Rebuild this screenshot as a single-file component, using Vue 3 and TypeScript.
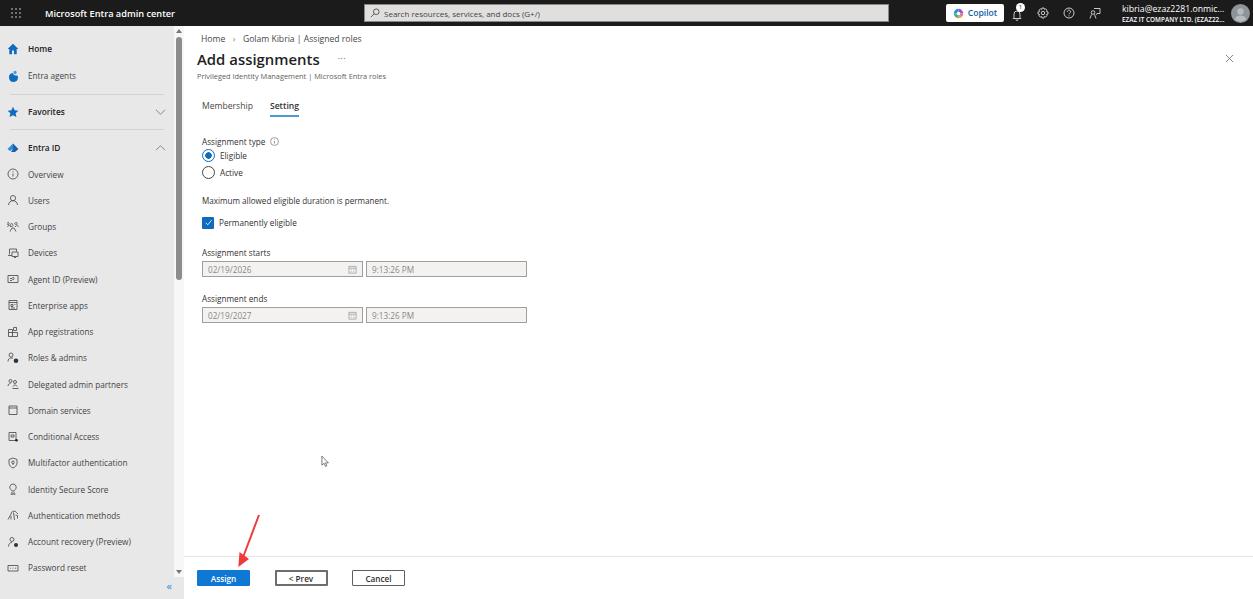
<template>
  <div class="app">
    <header class="topbar">
      <svg class="waffle" viewBox="0 0 10 10" width="10" height="10">
        <g fill="#d8d8d8">
          <template v-for="y in [1, 5, 9]" :key="y">
            <circle v-for="x in [1, 5, 9]" :key="x" :cx="x" :cy="y" r="0.8" />
          </template>
        </g>
      </svg>
      <div class="brand">Microsoft Entra admin center</div>
      <div class="search">
        <svg viewBox="0 0 12 12" width="10" height="10" fill="none" stroke="#444" stroke-width="1">
          <circle cx="7.5" cy="4.5" r="3.4" />
          <path d="M5 7 1 11" />
        </svg>
        <span>Search resources, services, and docs (G+/)</span>
      </div>
      <div class="top-right">
        <button class="copilot">
          <svg viewBox="0 0 12 12" width="11" height="11">
            <path d="M6 .8A5.200 5.200 0 0 0 .8 6H4a2 2 0 0 1 2-2z" fill="#2f8fe8" />
            <path d="M6 .8A5.200 5.200 0 0 1 11.200 6H8a2 2 0 0 0-2-2z" fill="#8a5fd8" />
            <path d="M.8 6A5.200 5.200 0 0 0 6 11.200V8a2 2 0 0 1-2-2z" fill="#3fb68b" />
            <path d="M11.200 6A5.200 5.200 0 0 1 6 11.200V8a2 2 0 0 0 2-2z" fill="#ee6a8c" />
            <path d="M6 11.200a5.200 5.200 0 0 0 3.500-1.400L8 7.500A2 2 0 0 1 6 8z" fill="#f5a83c" />
          </svg>
          Copilot
        </button>
        <div class="bell">
          <svg viewBox="0 0 12 12" width="12" height="12" fill="none" stroke="#ddd" stroke-width="0.9">
            <path d="M3 8.500V5a3 3 0 0 1 6 0v3.500l1 1H2zM5 10.500a1 1 0 0 0 2 0" />
          </svg>
          <span class="badge">1</span>
        </div>
        <svg class="top-ico gear" viewBox="0 0 12 12" width="12" height="12" fill="none" stroke="#ddd" stroke-width="0.9">
          <circle cx="6" cy="6" r="1.7" />
          <path d="M5 1h2l.3 1.400 1.300-.6 1.400 1.400-.6 1.300L11 5v2l-1.600.4.6 1.300-1.400 1.400-1.300-.6L7 11H5l-.3-1.500-1.300.6L2 8.700l.6-1.300L1 7V5l1.600-.5L2 3.200l1.400-1.400 1.300.6z" />
        </svg>
        <svg class="top-ico" viewBox="0 0 12 12" width="12" height="12" fill="none" stroke="#ddd" stroke-width="0.9">
          <circle cx="6" cy="6" r="5" />
          <path d="M4.400 4.700a1.600 1.600 0 1 1 2.400 1.400c-.5.3-.8.6-.8 1.200M6 8.400v.9" />
        </svg>
        <svg class="top-ico" viewBox="0 0 12 12" width="12" height="12" fill="none" stroke="#ddd" stroke-width="0.9">
          <path d="M5 1.500h6v5H8L7 8" />
          <circle cx="4" cy="5.500" r="1.800" />
          <path d="M1 11.500 2.500 7.500M7 11.500 5.500 7.500" />
        </svg>
        <div class="account">
          <div class="acc-mail">kibria@ezaz2281.onmic...</div>
          <div class="acc-org">EZAZ IT COMPANY LTD. (EZAZ22...</div>
        </div>
        <svg class="avatar" viewBox="0 0 19 19" width="19" height="19">
          <circle cx="9.500" cy="9.500" r="9.500" fill="#8e9499" />
          <circle cx="9.500" cy="7.500" r="3.200" fill="#b7bcc0" />
          <path d="M3.800 15.500c.6-3 3-4 5.700-4s5.100 1 5.700 4a9.500 9.500 0 0 1-11.400 0z" fill="#b7bcc0" />
        </svg>
      </div>
    </header>

    <div class="body">
      <div class="side-col">
        <div class="side-top">
          <aside class="sidebar">
            <div v-for="item in navItems" :key="item.label" :class="['nav-row', item.kind]">
              <template v-if="item.kind !== 'divider'">
                <svg class="nav-ico" viewBox="0 0 12 12" width="12" height="12" fill="none" stroke="#555" stroke-width="0.9">
                  <path v-if="item.fill" :d="item.icon" :fill="item.fill" stroke="none" />
                  <path v-else :d="item.icon" />
                  <path v-if="item.icon2" :d="item.icon2" :fill="item.fill2" stroke="none" />
                </svg>
                <span class="nav-label">{{ item.label }}</span>
                <svg v-if="item.chevron" class="chev" viewBox="0 0 12 6" width="11" height="6" fill="none" stroke="#666" stroke-width="0.8">
                  <path :d="item.chevron === 'up' ? 'M1 5.500 6 .5l5 5' : 'M1 .5l5 5 5-5'" />
                </svg>
              </template>
            </div>
          </aside>
          <div class="scrollbar">
            <span class="arrow-up"></span>
            <span class="thumb"></span>
            <span class="arrow-down"></span>
          </div>
        </div>
        <div class="collapse">«</div>
      </div>

      <main class="main">
        <div class="content">
          <div class="crumbs">
            <span>Home</span>
            <span class="sep">›</span>
            <span>Golam Kibria | Assigned roles</span>
          </div>
          <div class="title-row">
            <h1>Add assignments</h1>
            <span class="more">···</span>
            <svg class="close" viewBox="0 0 10 10" width="9" height="9" fill="none" stroke="#555" stroke-width="0.8">
              <path d="M1 1l8 8M9 1 1 9" />
            </svg>
          </div>
          <div class="subtitle">Privileged Identity Management | Microsoft Entra roles</div>

          <div class="tabs">
            <span class="tab">Membership</span>
            <span class="tab active">Setting</span>
          </div>

          <div class="form">
            <div class="label-row">
              Assignment type
              <svg viewBox="0 0 10 10" width="9" height="9" fill="none" stroke="#666" stroke-width="0.7">
                <circle cx="5" cy="5" r="4.400" />
                <path d="M5 4.300v3M5 2.500v.9" />
              </svg>
            </div>
            <div class="radio-row"><span class="radio on"></span>Eligible</div>
            <div class="radio-row"><span class="radio"></span>Active</div>
            <p class="note">Maximum allowed eligible duration is permanent.</p>
            <div class="check-row">
              <span class="check">
                <svg viewBox="0 0 12 12" width="11" height="11" fill="none" stroke="#fff" stroke-width="0.9">
                  <path d="M3 6.300 5.200 8.500 9.300 3.500" />
                </svg>
              </span>
              Permanently eligible
            </div>

            <div v-for="row in dateRows" :key="row.label" class="date-block">
              <div class="date-label">{{ row.label }}</div>
              <div class="date-inputs">
                <div class="input date">
                  {{ row.date }}
                  <svg viewBox="0 0 10 10" width="9" height="9" fill="none" stroke="#999" stroke-width="0.8">
                    <path d="M1 1.500h8v7.500H1zM1 3.500h8M3 5h1M6 5h1M3 7h1M6 7h1" />
                  </svg>
                </div>
                <div class="input time">{{ row.time }}</div>
              </div>
            </div>
          </div>
        </div>

        <footer class="footer">
          <button class="btn primary">Assign</button>
          <button class="btn prev">&lt; Prev</button>
          <button class="btn cancel">Cancel</button>
        </footer>

        <!-- annotation drawn on top of the screenshot -->
        <svg class="red-arrow" viewBox="0 0 30 60" width="30" height="60">
          <path d="M24 1 8.500 42" stroke="#ee3b3b" stroke-width="2" fill="none" />
          <path d="M3.300 53 4.500 38 14 45z" fill="#ee3b3b" />
        </svg>
        <svg class="cursor" viewBox="0 0 10 14" width="9" height="13" fill="#fff" stroke="#333" stroke-width="0.7">
          <path d="M1 1v10l2.500-2 1.500 3.500 1.500-.6L5 8.500h3.200z" />
        </svg>
      </main>
    </div>
  </div>
</template>

<script setup lang="ts">
interface NavItem {
  label: string
  kind: string
  icon?: string
  fill?: string
  icon2?: string
  fill2?: string
  chevron?: string
}

// 12x12 icons, kept simple on purpose
const blue = '#0f6cbd'
const navItems: NavItem[] = [
  { label: 'Home', kind: 'strong', fill: blue, icon: 'M6 .8 .6 6h1.700v5.200h2.700V7.500h2v3.700h2.700V6h1.700z' },
  { label: 'Entra agents', kind: 'item-top', fill: blue, icon: 'M5.500 3a4.500 4.500 0 1 0 5.500 4.500c0-.8-.2-1.500-.6-2.100C9 6 6.500 5.300 5.500 3z', icon2: 'M8 .8a1.700 1.700 0 1 0 0 3.400A1.700 1.700 0 0 0 8 .8z', fill2: '#3d9be9' },
  { label: 'd1', kind: 'divider' },
  { label: 'Favorites', kind: 'strong fav', fill: blue, icon: 'M6 .8l1.600 3.500 3.800.4-2.800 2.600.8 3.800L6 9.200l-3.400 1.900.8-3.800L.6 4.700l3.800-.4z', chevron: 'down' },
  { label: 'd2', kind: 'divider' },
  { label: 'Entra ID', kind: 'strong', fill: '#2b8fe0', icon: 'M6 1.500.5 7l2.500 2 3-2z', icon2: 'M6 1.500 11.500 7 8 10H4l2-3z', fill2: '#1a5fb0', chevron: 'up' },
  { label: 'Overview', kind: 'item', icon: 'M6 1a5 5 0 1 0 0 10A5 5 0 0 0 6 1zM6 5.500v3M6 3.300v1' },
  { label: 'Users', kind: 'item', icon: 'M6 1.500a2.600 2.600 0 1 0 0 5.200 2.600 2.600 0 0 0 0-5.200zM1.500 11c.3-2.700 2-4.300 4.500-4.300s4.200 1.600 4.500 4.300' },
  { label: 'Groups', kind: 'item', icon: 'M2 2.500a1 1 0 1 0 0 .1zM10 2.500a1 1 0 1 0 0 .1zM6 4a1.400 1.400 0 1 0 0 .1zM3 5l1 1M9 5 8 6M3 10.500 5 7h2l2 3.500M.5 6l1-1.500h1M11.500 6l-1-1.500h-1' },
  { label: 'Devices', kind: 'item', icon: 'M2.500 7.500V2h7v2.500M1 8.500h4M5 5h6v4.500H5zM7 10.500h2' },
  { label: 'Agent ID (Preview)', kind: 'item', icon: 'M1 2.500h10v7H1zM3 5.500h2M3 7.500h2M7 5.500a1 1 0 1 0 0 .1z' },
  { label: 'Enterprise apps', kind: 'item', icon: 'M2 1.500h8v9H2zM2 3.500h8M4 5.500h2v2H4zM7.500 5.500h1M4 9h4' },
  { label: 'App registrations', kind: 'item', icon: 'M1.500 3.500h4v7h-4zM5.500 6.500h5v4h-5zM1.500 6.500h4M6.500 1.500l3-.1v3.100h-3z' },
  { label: 'Roles & admins', kind: 'item', icon: 'M4 1a2 2 0 1 0 0 4 2 2 0 0 0 0-4zM1 9.500c0-2 1-3.500 3-3.500h2', icon2: 'M9 6.500a2.300 2.300 0 1 0 0 4.600 2.300 2.300 0 0 0 0-4.600z', fill2: '#333' },
  { label: 'Delegated admin partners', kind: 'item', icon: 'M3.500 1.500a1.500 1.500 0 1 0 0 3 1.500 1.500 0 0 0 0-3zM8 2.500a1.500 1.500 0 1 0 0 3 1.500 1.500 0 0 0 0-3zM1 8c0-1.500 1-2.500 2.500-2.500M5.500 10.500h6M6 8.500c.3-1 1-1.500 2-1.500s1.700.5 2 1.500' },
  { label: 'Domain services', kind: 'item', icon: 'M2 2h8v8.500H2zM2 4h8' },
  { label: 'Conditional Access', kind: 'item', icon: 'M2 1.500h7v8H2zM4 4h3v2H4z', icon2: 'M9.500 8a1.300 1.300 0 1 0 0 2.600 1.300 1.300 0 0 0 0-2.600z', fill2: '#222' },
  { label: 'Multifactor authentication', kind: 'item', icon: 'M6 1 2 2.500v3.500c0 2.500 2 4.200 4 5 2-.8 4-2.500 4-5V2.500zM6 4a1.300 1.300 0 1 0 0 2.600A1.300 1.300 0 0 0 6 4zM6 6.600V8' },
  { label: 'Identity Secure Score', kind: 'item', icon: 'M6 1a3.200 3.200 0 0 0-2 5.700c.5.400.7.800.7 1.300h2.600c0-.5.200-.9.700-1.300A3.200 3.200 0 0 0 6 1zM4 10h4M3.500 11.200h5' },
  { label: 'Authentication methods', kind: 'item', icon: 'M1 10.500 4 5a3 3 0 0 1 5.500-1.500L11 5M6.500 3.500l1 7.500M4 7v3.500M8.500 6l2 .5v3' },
  { label: 'Account recovery (Preview)', kind: 'item', icon: 'M5 1.500a2 2 0 1 0 0 4 2 2 0 0 0 0-4zM1.500 10.500c0-2.500 1.500-4 3.500-4', icon2: 'M9 7a2 2 0 1 0 0 4 2 2 0 0 0 0-4z', fill2: '#333' },
  { label: 'Password reset', kind: 'item', icon: 'M1 3.500h10v5.500H1zM3 6.200h.8M5.500 6.200h.8M8 6.200h1.200' },
]

const dateRows = [
  { label: 'Assignment starts', date: '02/19/2026', time: '9:13:26 PM' },
  { label: 'Assignment ends', date: '02/19/2027', time: '9:13:26 PM' },
]
</script>

<style>
html, body {
  margin: 0;
  height: 100%;
  overflow: hidden;
}
</style>

<style scoped>
.app {
  width: 1253px;
  height: 599px;
  display: flex;
  flex-direction: column;
  font-family: "Open Sans", "Noto Sans", sans-serif;
  font-size: 8.2px;
  color: #323130;
  background: #fff;
  overflow: hidden;
}

/* top bar */
.topbar {
  height: 26px;
  flex: none;
  display: flex;
  align-items: center;
  background: #1b1b1b;
  color: #fff;
  box-sizing: border-box;
  padding-left: 11px;
}
.brand {
  margin-left: 24px;
  width: 319px;
  font-size: 9.2px;
  font-weight: 600;
}
.search {
  width: 525px;
  height: 18px;
  box-sizing: border-box;
  display: flex;
  align-items: center;
  gap: 4px;
  padding-left: 5px;
  background: #e0dfdd;
  border: 1px solid #8a8886;
  color: #444;
  font-size: 8px;
}
.top-right {
  margin-left: 57px;
  display: flex;
  align-items: center;
}
.copilot {
  width: 58px;
  height: 18px;
  display: flex;
  align-items: center;
  justify-content: center;
  gap: 4px;
  padding: 0;
  border: none;
  border-radius: 2px;
  background: #fff;
  color: #115ea3;
  font: 600 8.6px "Open Sans", sans-serif;
}
.bell {
  position: relative;
  margin-left: 7px;
  height: 12px;
  margin-top: 3px;
}
.badge {
  position: absolute;
  top: -6px;
  left: 5px;
  width: 9px;
  height: 9px;
  border-radius: 50%;
  background: #fff;
  color: #222;
  font-size: 6px;
  line-height: 9px;
  text-align: center;
}
.gear { margin-left: 14px; }
.top-ico + .top-ico { margin-left: 14px; }
.account {
  margin-left: 21px;
  width: 109px;
  white-space: nowrap;
}
.acc-mail {
  font-size: 8.7px;
  line-height: 12px;
}
.acc-org {
  font-size: 6.4px;
  font-weight: 600;
  line-height: 9px;
}

/* left column */
.body {
  flex: 1;
  display: flex;
  min-height: 0;
}
.side-col {
  width: 184px;
  flex: none;
  display: flex;
  flex-direction: column;
}
.side-top {
  flex: 1;
  display: flex;
  min-height: 0;
}
.sidebar {
  width: 174px;
  flex: none;
  background: #e8e8e8;
  box-sizing: border-box;
  padding-top: 9px;
  overflow: hidden;
}
.nav-row {
  height: 26.25px;
  display: flex;
  align-items: center;
  padding-left: 7px;
  color: #444;
}
.nav-ico { flex: none; }
.nav-label { margin-left: 9px; white-space: nowrap; }
.strong { color: #222; font-weight: 600; font-size: 8.3px; height: 27px; }
.item-top { height: 27px; }
.nav-row.divider {
  height: 1px;
  padding: 0;
  margin: 5px 10px 4px;
  background: #d2d2d2;
}
.fav { height: 25px; }
.chev {
  margin-left: auto;
  margin-right: 8px;
}
.collapse {
  height: 22px;
  flex: none;
  background: #e8e8e8;
  color: #2b88d8;
  font-size: 11px;
  line-height: 17px;
  text-align: right;
  padding-right: 12px;
}

.scrollbar {
  width: 10px;
  flex: none;
  background: #f7f7f7;
  display: flex;
  flex-direction: column;
  align-items: center;
  padding: 3px 0 3px;
  box-sizing: border-box;
}
.arrow-up {
  width: 0;
  height: 0;
  border: 3px solid transparent;
  border-top: none;
  border-bottom: 4px solid #777;
}
.thumb {
  width: 6px;
  height: 243px;
  margin-top: 4px;
  border-radius: 3px;
  background: #8c8c8c;
}
.arrow-down {
  width: 0;
  height: 0;
  margin-top: auto;
  border: 3px solid transparent;
  border-bottom: none;
  border-top: 4px solid #777;
}

/* main */
.main {
  flex: 1;
  position: relative;
  display: flex;
  flex-direction: column;
  min-width: 0;
}
.content {
  flex: 1;
  padding: 6.5px 19px 0 13px;
}
.crumbs {
  display: flex;
  gap: 7.5px;
  padding-left: 4px;
  color: #484644;
  font-size: 8.6px;
  line-height: 12px;
}
.sep { color: #777; }
.title-row {
  display: flex;
  align-items: center;
  height: 23px;
  margin-top: 2.5px;
}
h1 {
  margin: 0;
  font-size: 14.9px;
  font-weight: 600;
  color: #1f1f1f;
}
.more {
  margin-left: 18px;
  color: #555;
  font-size: 9px;
  letter-spacing: 0.5px;
}
.close { margin-left: auto; }
.subtitle {
  color: #605e5c;
  font-size: 7.4px;
  line-height: 10px;
  margin-top: 1px;
}
.tabs {
  display: flex;
  gap: 17px;
  padding-left: 5px;
  margin-top: 17px;
  font-size: 8.6px;
}
.tab {
  height: 17px;
  line-height: 16px;
  color: #484644;
}
.tab.active {
  color: #323130;
  font-weight: 600;
  border-bottom: 2px solid #4a9ad4;
}
.form {
  padding-left: 5px;
  margin-top: 19px;
}
.label-row {
  display: flex;
  align-items: center;
  gap: 5px;
  height: 11px;
}
.radio-row, .check-row {
  display: flex;
  align-items: center;
  gap: 5px;
  height: 17px;
}
.radio {
  width: 11px;
  height: 11px;
  border: 1px solid #444;
  border-radius: 50%;
  background: #fff;
}
.radio.on {
  border-color: #0f6cbd;
  background: radial-gradient(circle, #0f6cbd 0 3px, #fff 3.500px);
}
.note {
  margin: 14px 0 0;
  line-height: 12px;
  font-size: 8.1px;
}
.check-row {
  margin-top: 7px;
}
.check {
  width: 12px;
  height: 12px;
  border-radius: 1px;
  background: #0f6cbd;
  display: flex;
  align-items: center;
  justify-content: center;
}
.date-block { margin-top: 16px; }
.check-row + .date-block { margin-top: 16px; }
.date-label { line-height: 12px; }
.date-inputs {
  display: flex;
  gap: 3px;
  margin-top: 2px;
}
.input {
  height: 16px;
  box-sizing: border-box;
  display: flex;
  align-items: center;
  justify-content: space-between;
  padding: 0 5px;
  background: #f3f2f1;
  border: 1px solid #a19f9d;
  color: #8a8886;
}
.input.date { width: 161px; }
.input.time { width: 161px; }

.footer {
  flex: none;
  height: 43px;
  box-sizing: border-box;
  border-top: 1px solid #e6e6e6;
  display: flex;
  align-items: flex-start;
  padding: 13px 0 0 13px;
  gap: 24.5px;
}
.btn {
  width: 53px;
  height: 16px;
  padding: 0;
  box-sizing: border-box;
  font: 600 8.2px "Open Sans", sans-serif;
  background: #fff;
  color: #323130;
  border: 1px solid #605e5c;
  border-radius: 1px;
}
.btn.primary {
  background: #0f78d4;
  border-color: #0f78d4;
  color: #fff;
}
.btn.prev { border: 2px solid #6e6e6e; }

/* overlays */
.red-arrow {
  position: absolute;
  left: 51px;
  bottom: 25px;
}
.cursor {
  position: absolute;
  left: 137px;
  top: 429px;
}
</style>
